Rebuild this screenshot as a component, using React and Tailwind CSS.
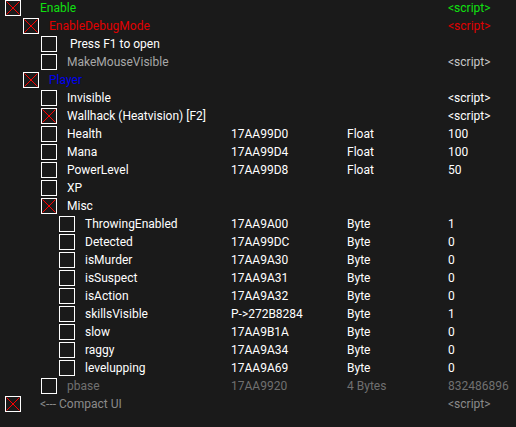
import React from "react";

const rows = [
  { lvl: 0, on: true, d: "Enable", c: "text-[#10e010]", v: "<script>", vc: "text-[#10e010]", pad: true },
  { lvl: 1, on: true, d: "EnableDebugMode", c: "text-[#e00000]", v: "<script>", vc: "text-[#e00000]" },
  { lvl: 2, d: "\u00a0Press F1 to open" },
  { lvl: 2, d: "MakeMouseVisible", c: "text-[#a8a8a8]", v: "<script>", vc: "text-[#c8c8c8]" },
  { lvl: 1, on: true, d: "Player", c: "text-[#0000f0]" },
  { lvl: 2, d: "Invisible", v: "<script>" },
  { lvl: 2, on: true, d: "Wallhack (Heatvision) [F2]", v: "<script>" },
  { lvl: 2, d: "Health", a: "17AA99D0", t: "Float", v: "100" },
  { lvl: 2, d: "Mana", a: "17AA99D4", t: "Float", v: "100" },
  { lvl: 2, d: "PowerLevel", a: "17AA99D8", t: "Float", v: "50" },
  { lvl: 2, d: "XP" },
  { lvl: 2, on: true, d: "Misc" },
  { lvl: 3, d: "ThrowingEnabled", a: "17AA9A00", t: "Byte", v: "1" },
  { lvl: 3, d: "Detected", a: "17AA99DC", t: "Byte", v: "0" },
  { lvl: 3, d: "isMurder", a: "17AA9A30", t: "Byte", v: "0" },
  { lvl: 3, d: "isSuspect", a: "17AA9A31", t: "Byte", v: "0" },
  { lvl: 3, d: "isAction", a: "17AA9A32", t: "Byte", v: "0" },
  { lvl: 3, d: "skillsVisible", a: "P->272B8284", t: "Byte", v: "1" },
  { lvl: 3, d: "slow", a: "17AA9B1A", t: "Byte", v: "0" },
  { lvl: 3, d: "raggy", a: "17AA9A34", t: "Byte", v: "0" },
  { lvl: 3, d: "levelupping", a: "17AA9A69", t: "Byte", v: "0" },
  { lvl: 2, d: "pbase", c: "text-[#707070]", a: "17AA9920", t: "4 Bytes", v: "832486896", all: "text-[#707070]" },
  { lvl: 0, on: true, d: "<--- Compact UI", c: "text-[#8a8a8a]", v: "<script>", vc: "text-[#8a8a8a]", pad: true },
];

const indent = ["pl-[5px]", "pl-[23px]", "pl-[41px]", "pl-[59px]"];

function Box({ on }) {
  return (
    <div className="relative w-[16px] h-[16px] shrink-0 border border-white">
      {on && (
        <svg className="absolute inset-0" width="14" height="14" viewBox="0 0 14 14">
          <line x1="0.5" y1="0.5" x2="13.5" y2="13.5" stroke="#ff0000" strokeWidth="1" />
          <line x1="13.5" y1="0.5" x2="0.5" y2="13.5" stroke="#ff0000" strokeWidth="1" />
          <rect x="6" y="6" width="2" height="2" fill="#ff0000" />
        </svg>
      )}
    </div>
  );
}

export default function App() {
  return (
    <div
      className="w-[516px] h-[427px] bg-[#1a1a1a] text-white text-[12px] leading-[16px] overflow-hidden"
      style={{ fontFamily: 'Roboto, "Noto Sans", sans-serif' }}
    >
      {rows.map((r, i) => (
        <div key={i} className={`grid grid-cols-[231px_116px_101px_1fr] h-[18px] ${r.all || ""}`}>
          <div className={`flex items-start ${indent[r.lvl]}`}>
            <Box on={r.on} />
            <span className={`whitespace-pre ${r.pad ? "ml-[19px]" : "ml-[10px]"} ${r.c || ""}`}>{r.d}</span>
          </div>
          <div>{r.a || ""}</div>
          <div>{r.t || ""}</div>
          <div className={r.vc || ""}>{r.v || ""}</div>
        </div>
      ))}
    </div>
  );
}
